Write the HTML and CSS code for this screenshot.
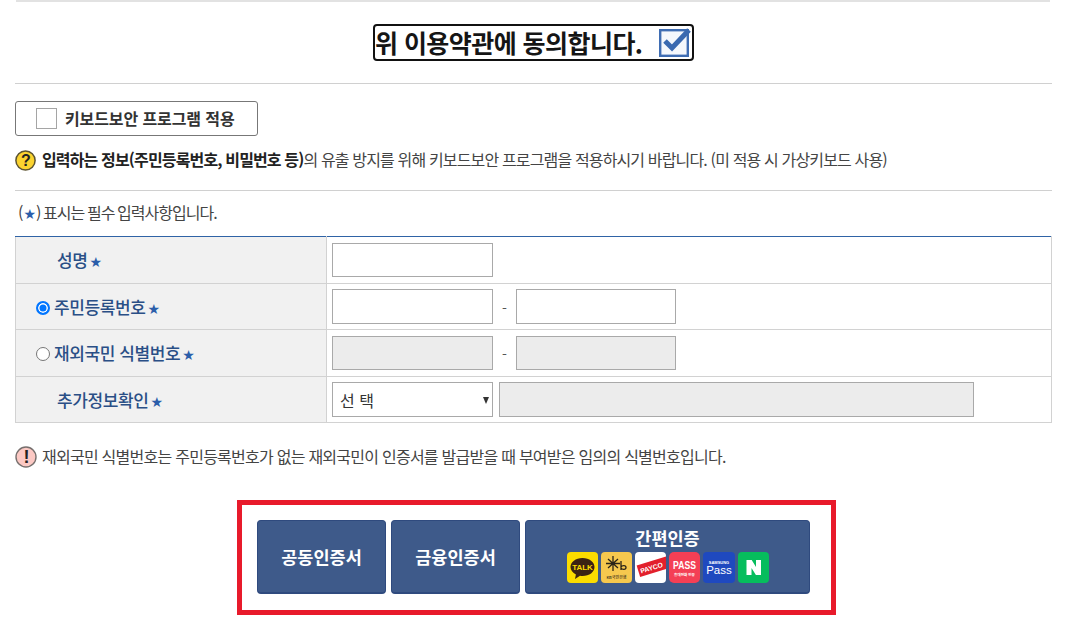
FILE: index.html
```html
<!DOCTYPE html>
<html lang="ko">
<head>
<meta charset="utf-8">
<title>본인확인</title>
<link rel="stylesheet" href="styles.css">
</head>
<body>
<main class="page">
  <div class="top-rule"></div>
  <section class="agree-row">
    <label class="agree-box">
      <span class="agree-text">위 이용약관에 동의합니다.</span>
      <svg class="agree-check" width="32" height="30" viewBox="0 0 32 30">
        <rect x="1.2" y="3.2" width="27.6" height="25.6" fill="#f4f7fc" stroke="#3f6db3" stroke-width="2.4"/>
        <path d="M6 14l7 7L30 3" fill="none" stroke="#3a69b0" stroke-width="5"/>
      </svg>
    </label>
  </section>
  <section class="keyboard">
    <label class="kb-btn"><span class="kb-box"></span><span>키보드보안 프로그램 적용</span></label>
    <p class="note help">
      <svg class="ico" width="21" height="21" viewBox="0 0 21 21"><circle cx="10.5" cy="10.5" r="9.6" fill="#fbd32f" stroke="#5d5430" stroke-width="1.5"/><text x="10.5" y="16" text-anchor="middle" class="ico-text">?</text></svg>
      <span><b>입력하는 정보(주민등록번호, 비밀번호 등)</b>의 유출 방지를 위해 키보드보안 프로그램을 적용하시기 바랍니다. (미 적용 시 가상키보드 사용)</span>
    </p>
  </section>
  <p class="note required">(<span class="star">★</span>) 표시는 필수 입력사항입니다.</p>
  <table class="form">
    <colgroup><col class="c-head"><col></colgroup>
    <tbody>
      <tr>
        <th class="indent">성명<span class="star">★</span></th>
        <td><span class="field"></span></td>
      </tr>
      <tr>
        <th><span class="radio on"></span>주민등록번호<span class="star">★</span></th>
        <td><span class="field tall"></span><span class="dash">-</span><span class="field short tall"></span></td>
      </tr>
      <tr>
        <th><span class="radio"></span>재외국민 식별번호<span class="star">★</span></th>
        <td><span class="field off"></span><span class="dash">-</span><span class="field off short"></span></td>
      </tr>
      <tr>
        <th class="indent">추가정보확인<span class="star">★</span></th>
        <td><span class="select-row"><span class="select">선 택<i class="arrow"></i></span><span class="field off wide"></span></span></td>
      </tr>
    </tbody>
  </table>
  <p class="note warn">
    <svg class="ico" width="22" height="22" viewBox="0 0 22 22"><circle cx="11" cy="11" r="10" fill="#fcc9c4" stroke="#77706e" stroke-width="1.4"/><text x="11" y="17" text-anchor="middle" class="ico-text big">!</text></svg>
    <span>재외국민 식별번호는 주민등록번호가 없는 재외국민이 인증서를 발급받을 때 부여받은 임의의 식별번호입니다.</span>
  </p>
  <div class="auth-wrap">
    <div class="auth-frame">
      <button class="auth-btn">공동인증서</button>
      <button class="auth-btn">금융인증서</button>
      <button class="auth-btn simple">
        <span>간편인증</span>
        <span class="logos">
          <svg width="31" height="31" viewBox="0 0 31 31"><rect width="31" height="31" rx="4" fill="#fbdc00"/><path d="M15.5 6C8.6 6 3.5 10 3.5 15c0 3.2 2.2 5.9 5.4 7.5L8 27l5-3.2c.8.1 1.6.2 2.5.2 6.9 0 12-4 12-9s-5.1-9-12-9z" fill="#3b2313"/><text x="15.5" y="18" text-anchor="middle" class="lg talk">TALK</text></svg>
          <svg width="31" height="31" viewBox="0 0 31 31"><rect width="31" height="31" rx="4" fill="#f6c84e"/><path d="M12 4v15M7 7l10 9M17 7L7 16M5 11.5h14" stroke="#2b2418" stroke-width="1.3" fill="none"/><path d="M20 9v9M20 15c1-2 5-2 5 .5s-4 2.5-5 .5" stroke="#2b2418" stroke-width="1.3" fill="none"/><text x="15.5" y="27" text-anchor="middle" class="lg kb">KB국민은행</text></svg>
          <svg width="31" height="31" viewBox="0 0 31 31"><defs><clipPath id="pc"><rect width="31" height="31" rx="4"/></clipPath></defs><g clip-path="url(#pc)"><rect width="31" height="31" fill="#fff"/><g transform="rotate(-17 15.5 16)"><rect x="3" y="9.5" width="40" height="12" fill="#e2202c"/><text x="5" y="18.5" class="lg payco">PAYCO</text></g></g></svg>
          <svg width="31" height="31" viewBox="0 0 31 31"><rect width="31" height="31" rx="5" fill="#f43f55"/><g transform="translate(15.5 17) scale(.75 1)"><text text-anchor="middle" class="lg pass">PASS</text></g><text x="15.5" y="24" text-anchor="middle" class="lg pass-sub">휴대전화 인증</text></svg>
          <svg width="32" height="31" viewBox="0 0 32 31"><rect width="32" height="31" rx="4" fill="#1f49bf"/><text x="16" y="11.5" text-anchor="middle" class="lg sam">SAMSUNG</text><text x="16" y="21.5" text-anchor="middle" class="lg spass">Pass</text></svg>
          <svg width="31" height="31" viewBox="0 0 31 31"><rect width="31" height="31" rx="4" fill="#06bd5d"/><path d="M8.5 8h5.2l4.3 7V8h5v15h-5.1l-4.4-7.1V23h-5z" fill="#fff"/></svg>
        </span>
      </button>
    </div>
  </div>
</main>
</body>
</html>
```
FILE: styles.css
```css
* { box-sizing: border-box; }
html, body { margin: 0; padding: 0; background: #fff; }
body {
  font-family: "Noto Sans CJK KR", "Noto Sans", sans-serif;
  color: #333;
  overflow: hidden;
}
.page { width: 1037px; margin-left: 15px; height: 638px; }
.top-rule { height: 2px; margin: 0 2px 0 1px; background: #e2e2e2; }
.agree-row {
  height: 82px;
  padding-top: 22px;
  border-bottom: 1px solid #d0d0d0;
  display: flex;
  justify-content: center;
}
.agree-box {
  width: 321px;
  height: 37px;
  border: 2px solid #111;
  border-radius: 4px;
  display: flex;
  align-items: center;
  justify-content: space-between;
  padding: 0 1px 0 0;
}
.agree-text { font-size: 25px; font-weight: 700; color: #151515; letter-spacing: -.55px; white-space: nowrap; line-height: 33px; }
.agree-check { flex: none; margin-top: -1px; }
.keyboard { height: 107px; padding-top: 17px; border-bottom: 1px solid #d0d0d0; }
.kb-btn {
  width: 243px;
  height: 35px;
  border: 1px solid #777;
  border-radius: 3px;
  display: flex;
  align-items: center;
  gap: 8px;
  padding: 0 0 2px 20px;
  font-size: 16px;
  font-weight: 700;
  color: #333;
  letter-spacing: -.1px;
}
.kb-box { width: 21px; height: 21px; border: 1px solid #a5a5a5; background: #fff; margin-top: 2px; }
.note { margin: 0; font-size: 16px; letter-spacing: -.85px; color: #444; display: flex; align-items: center; white-space: nowrap; }
.note b { color: #222; font-weight: 700; }
.ico { flex: none; }
.ico-text { font: 700 16px "Liberation Sans", sans-serif; fill: #222; }
.ico-text.big { font-size: 18px; }
.help { margin-top: 12px; height: 24px; gap: 6px; }
.help span { margin-bottom: 2px; }
.required { display: block; height: 23px; margin-top: 10px; padding-left: 3px; line-height: 23px; word-spacing: -1px; letter-spacing: -.95px; }
.star { color: #2b5eaa; font-size: 14px; margin: 0 1px; font-family: "DejaVu Sans", sans-serif; line-height: 1; }
.form {
  width: 1037px;
  margin-top: 12px;
  border-collapse: collapse;
  table-layout: fixed;
  border-top: 1px solid #2f63a6;
}
.c-head { width: 311px; }
.form th, .form td { border: 1px solid #d2d2d2; padding: 0; height: 46.5px; }
.form tr:first-child th, .form tr:first-child td { border-top: 1px solid #2f63a6; }
.form th {
  background: #f1f1f1;
  color: #2a4f86;
  font-size: 17px;
  font-weight: 500;
  text-align: left;
  padding: 0 0 0 20px;
  letter-spacing: -.4px;
  white-space: nowrap;
}
.form th.indent { padding-left: 41px; }
.form td { padding-left: 5px; }
.form th .star { margin-left: 2px; }
.radio {
  display: inline-block;
  width: 14px;
  height: 14px;
  margin-right: 4px;
  vertical-align: -1px;
  border: 1px solid #767676;
  border-radius: 50%;
  background: #fff;
}
.radio.on { border: 2px solid #0075ff; box-shadow: inset 0 0 0 1.5px #fff; background: #0075ff; }
.field {
  display: inline-block;
  vertical-align: middle;
  width: 161px;
  height: 34px;
  border: 1px solid #a9a9a9;
  background: #fff;
}
.field.tall { height: 35px; }
.field.short { width: 160px; }
.field.off { background: #ececec; }
.field.wide { width: 475px; height: 35px; }
.dash { display: inline-block; width: 23px; text-align: center; vertical-align: middle; font-size: 14px; color: #555; padding-top: 3px; }
.select-row { display: flex; gap: 6px; }
.select {
  position: relative;
  width: 161px;
  height: 35px;
  border: 1px solid #a9a9a9;
  background: #fff;
  font-size: 16px;
  line-height: 35px;
  padding-left: 7px;
  color: #333;
}
.arrow {
  position: absolute;
  right: 1px;
  top: 14px;
  border-left: 3.5px solid transparent;
  border-right: 3.5px solid transparent;
  border-top: 7px solid #333;
  margin-right: 2px;
}
.warn { margin-top: 23px; height: 22px; gap: 5px; letter-spacing: -.75px; }
.warn span { margin-bottom: 2px; }
.auth-wrap { display: flex; justify-content: center; margin-top: 32px; padding-left: 6px; }
.auth-frame {
  width: 599px;
  height: 115px;
  border: 5px solid #e81a2b;
  display: flex;
  gap: 5px;
  padding: 15px 0 0 15px;
}
.auth-btn {
  width: 129px;
  height: 74px;
  border: 1px solid #2f4a7e;
  border-bottom-width: 2px;
  border-radius: 4px;
  background: #3e5a8a;
  color: #fff;
  font-family: "Noto Sans CJK KR", sans-serif;
  font-size: 17.5px;
  font-weight: 700;
  letter-spacing: 0;
  padding: 0;
}
.auth-btn.simple {
  width: 285px;
  display: flex;
  flex-direction: column;
  align-items: center;
  line-height: 22px;
  padding-top: 6px;
}
.logos { display: flex; gap: 3.2px; margin-top: 3px; padding-left: 1px; }
.logos svg { display: block; }
.lg { font-family: "Liberation Sans", sans-serif; font-weight: 700; fill: #fff; }
.talk { font-size: 8px; fill: #fbdc00; }
.kb { font-size: 4px; fill: #2b2418; font-family: "Noto Sans CJK KR", sans-serif; font-weight: 500; }
.payco { font-size: 6.8px; }
.pass { font-size: 11.5px; }
.pass-sub { font-size: 3.6px; font-family: "Noto Sans CJK KR", sans-serif; }
.sam { font-size: 4px; }
.spass { font-size: 11.5px; font-weight: 400; }
```
